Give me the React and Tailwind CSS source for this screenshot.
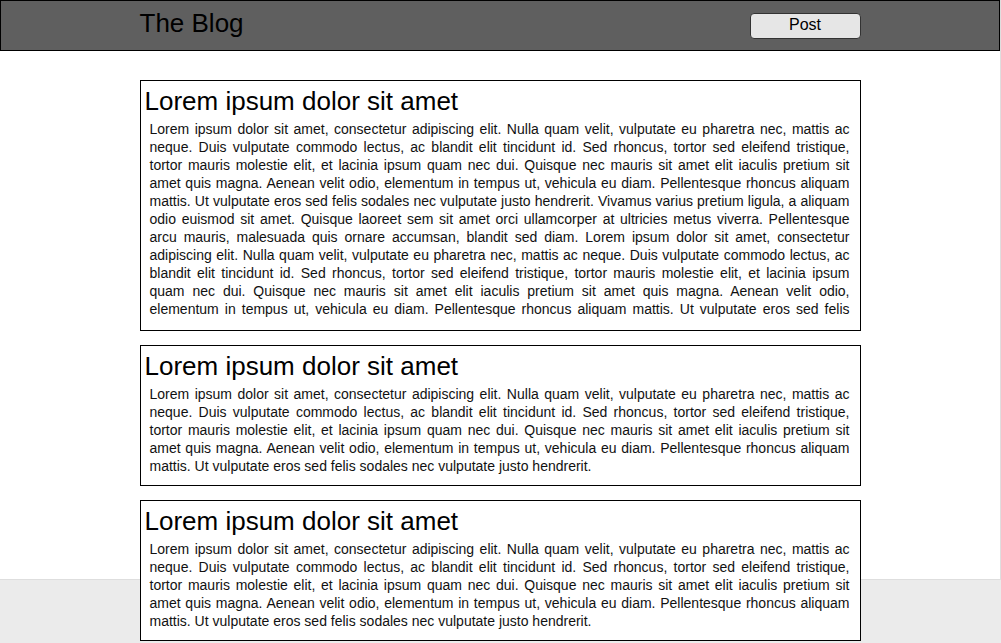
const SHORT =
  'Lorem ipsum dolor sit amet, consectetur adipiscing elit. Nulla quam velit, vulputate eu pharetra nec, mattis ac neque. Duis vulputate commodo lectus, ac blandit elit tincidunt id. Sed rhoncus, tortor sed eleifend tristique, tortor mauris molestie elit, et lacinia ipsum quam nec dui. Quisque nec mauris sit amet elit iaculis pretium sit amet quis magna. Aenean velit odio, elementum in tempus ut, vehicula eu diam. Pellentesque rhoncus aliquam mattis. Ut vulputate eros sed felis sodales nec vulputate justo hendrerit.';

const LONG_PART =
  SHORT +
  ' Vivamus varius pretium ligula, a aliquam odio euismod sit amet. Quisque laoreet sem sit amet orci ullamcorper at ultricies metus viverra. Pellentesque arcu mauris, malesuada quis ornare accumsan, blandit sed diam.';

const LONG = LONG_PART + ' ' + LONG_PART;

const posts = [
  { id: 1, title: 'Lorem ipsum dolor sit amet', body: LONG, clipped: true },
  { id: 2, title: 'Lorem ipsum dolor sit amet', body: SHORT },
  { id: 3, title: 'Lorem ipsum dolor sit amet', body: SHORT }
];

function PostCard({ post }) {
  return (
    <article className="border border-black bg-white pb-[10px] pt-[5px]">
      <h2 className="pl-[4px] text-[26px] font-normal leading-[30px] text-black">{post.title}</h2>
      <p
        className={
          post.clipped
            ? 'mt-[4px] h-[200px] overflow-hidden pl-[9px] pr-[10px] text-justify text-[14px] leading-[18px] text-[#111]'
            : 'mt-[4px] pl-[9px] pr-[10px] text-justify text-[14px] leading-[18px] text-[#111]'
        }
      >
        {post.body}
      </p>
    </article>
  );
}

export default function App() {
  return (
    <div className="min-h-screen bg-[#ebebeb] font-['Liberation_Sans',Arial,sans-serif] text-black">
      <div className="h-[580px] w-full border-b border-r border-[#dedede] bg-white">
        <header className="h-[51px] border border-black bg-[#5f5f5f]">
          <div className="mx-auto flex w-[721px] items-start justify-between">
            <h1 className="pt-[7px] text-[26px] font-normal leading-[30px] text-black">The Blog</h1>
            <button className="mt-[12px] h-[26px] w-[111px] rounded-[4px] border border-[#333] bg-[#e6e6e6] pb-[2px] text-[16px] leading-[20px] text-black">
              Post
            </button>
          </div>
        </header>

        <main className="mx-auto mt-[29px] flex w-[721px] flex-col gap-[14px]">
          {posts.map((post) => (
            <PostCard key={post.id} post={post} />
          ))}
        </main>
      </div>
    </div>
  );
}
